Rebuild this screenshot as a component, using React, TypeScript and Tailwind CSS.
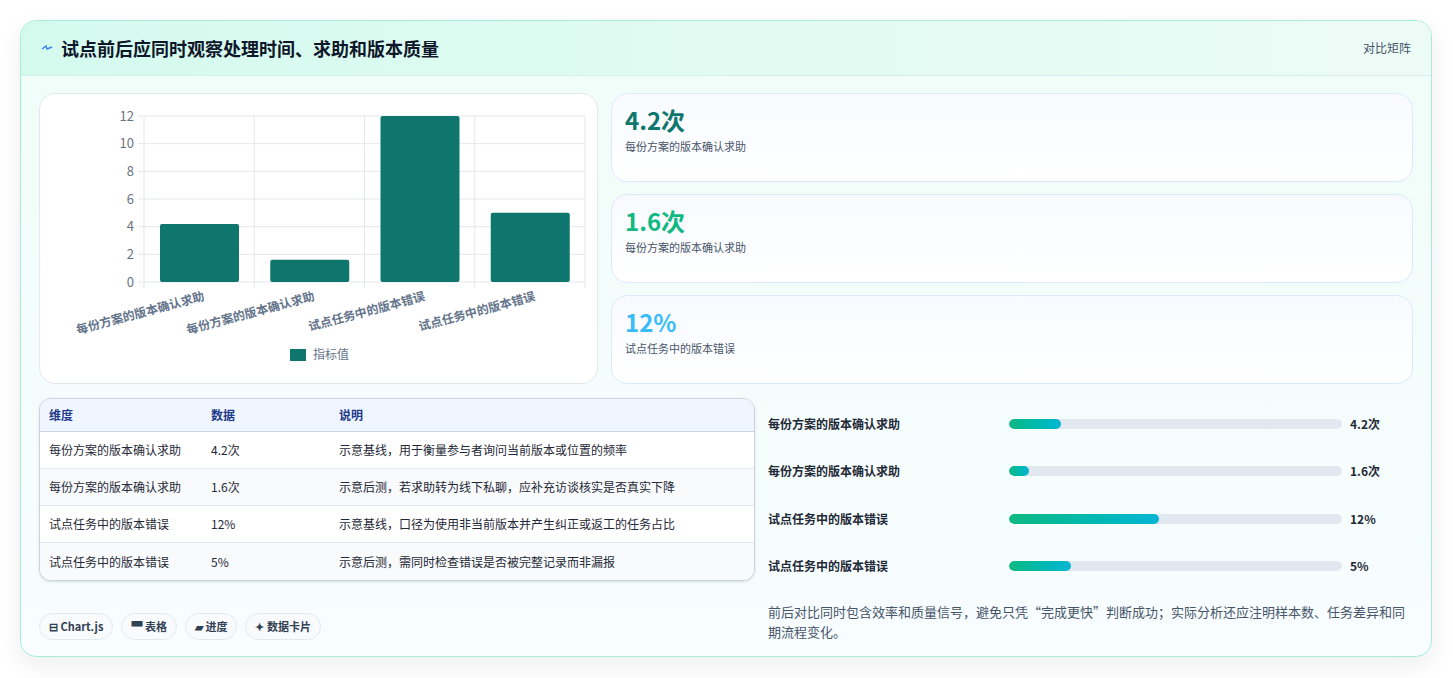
import React from "react";

const font = { fontFamily: '"Noto Sans CJK SC", "Noto Sans", sans-serif' };

function Chart() {
  const x0 = 104, x1 = 545, y0 = 188, yTop = 22;
  const h = y0 - yTop;
  const cw = (x1 - x0) / 4;
  const vals = [4.2, 1.6, 12, 5];
  const labels = ["每份方案的版本确认求助", "每份方案的版本确认求助", "试点任务中的版本错误", "试点任务中的版本错误"];
  return (
    <svg width="556" height="288" viewBox="0 0 556 288" style={font}>
      {[0, 2, 4, 6, 8, 10, 12].map((t) => {
        const y = y0 - (t / 12) * h;
        return (
          <g key={t}>
            <line x1={x0 - 6} x2={x1} y1={y} y2={y} stroke="#e5e7eb" strokeWidth="1" />
            <text x={x0 - 10} y={y + 4.5} textAnchor="end" fontSize="13" fill="#6b7280">{t}</text>
          </g>
        );
      })}
      {[0, 1, 2, 3, 4].map((i) => (
        <line key={i} x1={x0 + i * cw} x2={x0 + i * cw} y1={yTop} y2={y0 + 6} stroke="#e5e7eb" />
      ))}
      {vals.map((v, i) => {
        const bh = (v / 12) * h;
        return <rect key={i} x={x0 + i * cw + 16} y={y0 - bh} width={79} height={bh} rx="2" fill="#0f766e" />;
      })}
      {labels.map((l, i) => (
        <text key={i} transform={`translate(${x0 + i * cw + cw / 2 + 6},${y0 + 18}) rotate(-15)`} textAnchor="end" fontSize="12" fontWeight="600" fill="#64748b">{l}</text>
      ))}
      <rect x="250" y="255" width="16" height="12" fill="#0f766e" />
      <text x="273" y="265" fontSize="12" fill="#64748b">指标值</text>
    </svg>
  );
}

const stats = [
  { v: "4.2次", c: "text-[#0f766e]", l: "每份方案的版本确认求助" },
  { v: "1.6次", c: "text-[#10b981]", l: "每份方案的版本确认求助" },
  { v: "12%", c: "text-[#38bdf8]", l: "试点任务中的版本错误" },
];

const rows = [
  ["每份方案的版本确认求助", "4.2次", "示意基线，用于衡量参与者询问当前版本或位置的频率"],
  ["每份方案的版本确认求助", "1.6次", "示意后测，若求助转为线下私聊，应补充访谈核实是否真实下降"],
  ["试点任务中的版本错误", "12%", "示意基线，口径为使用非当前版本并产生纠正或返工的任务占比"],
  ["试点任务中的版本错误", "5%", "示意后测，需同时检查错误是否被完整记录而非漏报"],
];

const bars = [
  ["每份方案的版本确认求助", "4.2次", 15.5],
  ["每份方案的版本确认求助", "1.6次", 6],
  ["试点任务中的版本错误", "12%", 45],
  ["试点任务中的版本错误", "5%", 18.5],
] as const;

export default function App() {
  return (
    <div className="w-[1453px] h-[678px] bg-white pt-5 pl-5" style={font}>
      <div className="w-[1412px] h-[637px] rounded-2xl border border-[#a7ecd9] bg-gradient-to-b from-[#f0fdf8] to-[#f8fdff] shadow-[0_8px_24px_rgba(15,23,42,0.08)] overflow-hidden flex flex-col">
        <div className="h-[55px] shrink-0 flex items-center justify-between px-5 bg-gradient-to-r from-[#d4faee] to-[#edfbf6] border-b border-[#d7eef0]">
          <div className="flex items-center gap-2">
            <svg width="12" height="12" viewBox="0 0 12 12"><path d="M1 7 L5 4 L6 7 L11 5" stroke="#3b82f6" strokeWidth="1.4" fill="none" /></svg>
            <span className="text-[18px] font-bold text-[#0f172a]">试点前后应同时观察处理时间、求助和版本质量</span>
          </div>
          <span className="text-[12px] text-[#475569]">对比矩阵</span>
        </div>
        <div className="flex-1 px-[18px] pt-[17px] flex flex-col">
          <div className="flex gap-[13px] h-[291px]">
            <div className="w-[559px] h-full rounded-2xl border border-[#e2e8f0] bg-white">
              <Chart />
            </div>
            <div className="flex-1 flex flex-col gap-[12px]">
              {stats.map((s, i) => (
                <div key={i} className="flex-1 rounded-2xl border border-[#dbeafe] bg-gradient-to-b from-[#f8faff] to-white px-[13px] pt-[10px]">
                  <div className={`text-[24px] font-bold leading-[32px] ${s.c}`}>{s.v}</div>
                  <div className="text-[11px] text-[#475569] mt-[2px]">{s.l}</div>
                </div>
              ))}
            </div>
          </div>
          <div className="flex gap-3 mt-[14px]">
            <div className="w-[716px] flex flex-col">
              <div className="rounded-xl border border-[#cbd5e1] overflow-hidden bg-white shadow-sm">
                <div className="flex h-[33px] items-center bg-[#eff6ff] border-b border-[#cbd5e1] text-[12px] font-semibold text-[#1e3a8a]">
                  <div className="w-[171px] pl-[9px]">维度</div>
                  <div className="w-[128px]">数据</div>
                  <div className="flex-1">说明</div>
                </div>
                {rows.map((r, i) => (
                  <div key={i} className={`flex h-[37px] items-center text-[12px] text-[#1f2937] ${i < 3 ? "border-b border-[#e2e8f0]" : ""} ${i % 2 ? "bg-[#f8fafc]" : "bg-white"}`}>
                    <div className="w-[171px] pl-[9px]">{r[0]}</div>
                    <div className="w-[128px]">{r[1]}</div>
                    <div className="flex-1">{r[2]}</div>
                  </div>
                ))}
              </div>
              <div className="flex gap-2 mt-[32px]">
                {["⊟ Chart.js", "▀ 表格", "▰ 进度", "✦ 数据卡片"].map((t) => (
                  <span key={t} className="h-[27px] px-[9px] flex items-center rounded-full border border-[#e2e8f0] bg-[#f8fafc] text-[11px] font-semibold text-[#334155]">{t}</span>
                ))}
              </div>
            </div>
            <div className="flex-1 flex flex-col pl-[1px]">
              <div className="flex flex-col gap-[0px] pt-[8px]">
                {bars.map((b, i) => (
                  <div key={i} className="h-[47.5px] flex items-center pb-[12px]">
                    <div className="w-[241px] text-[12px] font-semibold text-[#1f2937]">{b[0]}</div>
                    <div className="w-[333px] h-[10px] rounded-full bg-[#e2e8f0] overflow-hidden">
                      <div className="h-full rounded-full bg-gradient-to-r from-[#10b981] to-[#06b6d4]" style={{ width: `${b[2]}%` }} />
                    </div>
                    <div className="ml-[8px] text-[12px] font-bold text-[#1f2937]">{b[1]}</div>
                  </div>
                ))}
              </div>
              <p className="mt-[6px] text-[13px] leading-[20px] text-[#475569] pr-[8px]">前后对比同时包含效率和质量信号，避免只凭“完成更快”判断成功；实际分析还应注明样本数、任务差异和同期流程变化。</p>
            </div>
          </div>
        </div>
      </div>
    </div>
  );
}
